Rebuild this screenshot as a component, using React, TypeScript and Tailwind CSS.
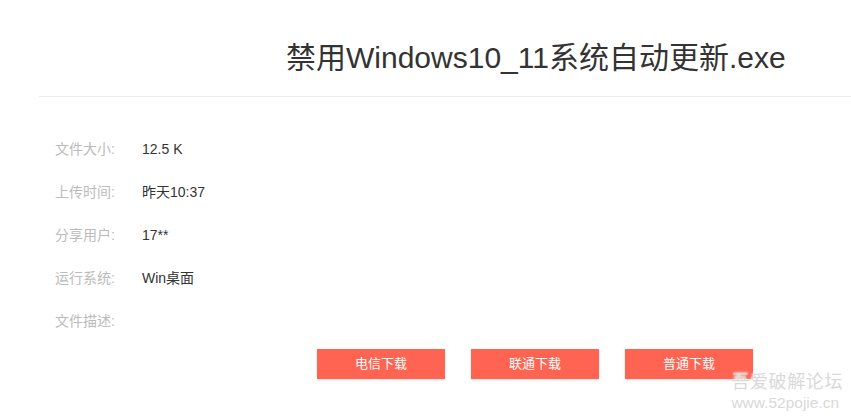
const FONT = "font-['Liberation_Sans','Noto_Sans_CJK_SC',sans-serif]"

const ROWS: [string, string][] = [
  ['文件大小:', '12.5 K'],
  ['上传时间:', '昨天10:37'],
  ['分享用户:', '17**'],
  ['运行系统:', 'Win桌面'],
  ['文件描述:', ''],
]

const BUTTONS = ['电信下载', '联通下载', '普通下载']

export default function App() {
  return (
    <div className={`relative h-[418px] w-[851px] overflow-hidden bg-white ${FONT}`}>
      <div className="ml-[39px] border-b border-[#ebebeb] pt-[43px] pb-[23px]">
        <h1 className="ml-[247px] text-[30px] leading-[30px] text-[#333]">禁用Windows10_11系统自动更新.exe</h1>
      </div>

      <div className="pt-[31px] pl-[55px]">
        {ROWS.map(([label, value]) => (
          <div key={label} className="flex h-[43px] items-center text-[14px]">
            <span className="w-[87px] text-[#bbb]">{label}</span>
            <span className="text-[#333]">{value}</span>
          </div>
        ))}
      </div>

      <div className="mt-[6px] flex gap-[26px] pl-[317px]">
        {BUTTONS.map(b => (
          <button key={b}
            className="h-[30px] w-[128px] bg-[#ff6452] text-[13px] text-white shadow-[0_1px_2px_rgba(0,0,0,0.15)]">
            {b}
          </button>
        ))}
      </div>

      <div className="pointer-events-none absolute right-[8px] bottom-[6px] flex flex-col items-start text-[#d9d9d9] [text-shadow:0_0_2px_#fff,0_0_3px_#fff]">
        <span className="text-[18px] leading-[22px] tracking-[0.6px]">吾爱破解论坛</span>
        <span className="text-[15.5px] leading-[19px]">www.52pojie.cn</span>
      </div>
    </div>
  )
}
